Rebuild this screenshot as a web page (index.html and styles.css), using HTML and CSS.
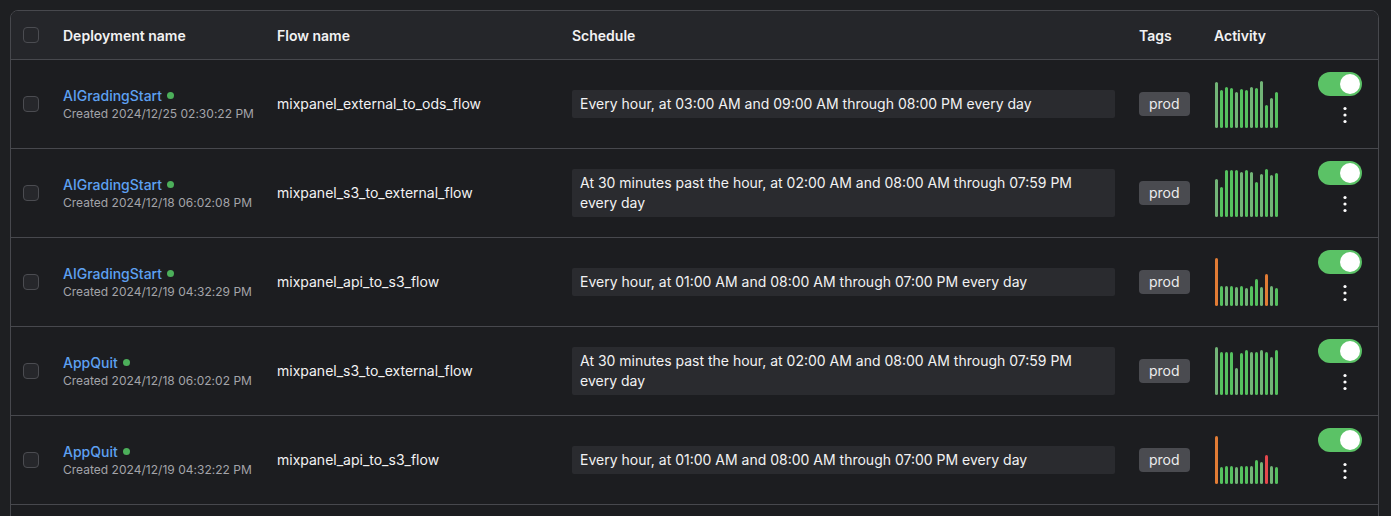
FILE: index.html
```html
<!DOCTYPE html>
<html lang="en">
<head>
    <meta charset="UTF-8">
    <meta name="viewport" content="width=device-width, initial-scale=1.0">
    <title>Deployments</title>
    <link rel="stylesheet" href="styles.css">
</head>
<body>
    <div class="table">
        <div class="row head">
            <div class="cell check"><span class="box"></span></div>
            <div class="cell">Deployment name</div>
            <div class="cell">Flow name</div>
            <div class="cell">Schedule</div>
            <div class="cell">Tags</div>
            <div class="cell">Activity</div>
            <div class="cell"></div>
        </div>
        <div id="rows"></div>
    </div>

    <script>
        // g = completed, m = muted, o = late, r = failed
        const deployments = [
            {
                name: 'AIGradingStart', created: '2024/12/25 02:30:22 PM',
                flow: 'mixpanel_external_to_ods_flow',
                schedule: 'Every hour, at 03:00 AM and 09:00 AM through 08:00 PM every day',
                bars: [[46,'m'],[38,'g'],[41,'g'],[40,'g'],[36,'m'],[39,'g'],[38,'g'],[41,'m'],[40,'g'],[47,'m'],[23,'g'],[30,'m'],[36,'g']]
            },
            {
                name: 'AIGradingStart', created: '2024/12/18 06:02:08 PM',
                flow: 'mixpanel_s3_to_external_flow',
                schedule: 'At 30 minutes past the hour, at 02:00 AM and 08:00 AM through 07:59 PM every day',
                bars: [[38,'m'],[30,'g'],[47,'g'],[47,'g'],[47,'g'],[45,'m'],[47,'g'],[45,'m'],[35,'g'],[43,'m'],[48,'g'],[42,'m'],[44,'g']]
            },
            {
                name: 'AIGradingStart', created: '2024/12/19 04:32:29 PM',
                flow: 'mixpanel_api_to_s3_flow',
                schedule: 'Every hour, at 01:00 AM and 08:00 AM through 07:00 PM every day',
                bars: [[48,'o'],[20,'g'],[20,'m'],[20,'g'],[19,'m'],[20,'g'],[18,'m'],[20,'g'],[27,'g'],[19,'m'],[32,'o'],[20,'m'],[18,'g']]
            },
            {
                name: 'AppQuit', created: '2024/12/18 06:02:02 PM',
                flow: 'mixpanel_s3_to_external_flow',
                schedule: 'At 30 minutes past the hour, at 02:00 AM and 08:00 AM through 07:59 PM every day',
                bars: [[48,'m'],[43,'g'],[43,'g'],[43,'g'],[27,'m'],[42,'g'],[45,'g'],[43,'m'],[43,'g'],[45,'m'],[43,'g'],[38,'m'],[45,'g']]
            },
            {
                name: 'AppQuit', created: '2024/12/19 04:32:22 PM',
                flow: 'mixpanel_api_to_s3_flow',
                schedule: 'Every hour, at 01:00 AM and 08:00 AM through 07:00 PM every day',
                bars: [[48,'o'],[17,'g'],[18,'g'],[18,'g'],[17,'m'],[18,'g'],[18,'g'],[18,'m'],[24,'g'],[22,'m'],[29,'r'],[18,'m'],[17,'g']]
            }
        ];

        const kebab = '<svg width="24" height="24" viewBox="0 0 24 24"><circle cx="12" cy="5.5" r="1.6"/><circle cx="12" cy="12" r="1.6"/><circle cx="12" cy="18.5" r="1.6"/></svg>';

        const html = deployments.map(d => {
            const bars = d.bars.map(([h, c]) => `<span class="bar ${c}" style="height:${h}px"></span>`).join('');
            return `
            <div class="row">
                <div class="cell check"><span class="box"></span></div>
                <div class="cell name">
                    <div class="title"><a href="#">${d.name}</a><span class="dot"></span></div>
                    <div class="created">Created ${d.created}</div>
                </div>
                <div class="cell flow">${d.flow}</div>
                <div class="cell"><div class="schedule">${d.schedule}</div></div>
                <div class="cell"><span class="tag">prod</span></div>
                <div class="cell"><div class="bars">${bars}</div></div>
                <div class="cell actions">
                    <span class="toggle"><span class="knob"></span></span>
                    <button class="menu">${kebab}</button>
                </div>
            </div>`;
        }).join('');

        document.getElementById('rows').innerHTML = html;
    </script>
</body>
</html>
```

FILE: styles.css
```css
html {
    overflow: hidden;
}

body {
    font-family: Inter, "Noto Sans", sans-serif;
    margin: 10px 12px 0 10px;
    background-color: #1e1f22;
    color: #f2f2f3;
    font-size: 14px;
}

.table {
    border: 1px solid #47484d;
    border-radius: 8px;
    background-color: #1c1d20;
    overflow: hidden;
    padding-bottom: 40px;
}

.row {
    display: grid;
    grid-template-columns: 52px 214px 295px 567px 75px 86px 1fr;
    height: 88px;
    border-bottom: 1px solid #47484d;
}

.row.head {
    height: 48px;
    background-color: #25262a;
    font-weight: 600;
}

.cell {
    display: flex;
    align-items: center;
    min-width: 0;
}

.flow {
    padding-bottom: 1px;
}

.check {
    padding-left: 12px;
}

.box {
    width: 14px;
    height: 14px;
    border: 1px solid #4b4c51;
    border-radius: 4px;
    background-color: #26272b;
}

.name {
    flex-direction: column;
    align-items: flex-start;
    justify-content: center;
}

.title {
    display: flex;
    align-items: center;
    gap: 5px;
    line-height: 18px;
}

.title a {
    color: #5ea1f2;
    text-decoration: none;
    font-weight: 500;
}

.dot {
    width: 7px;
    height: 7px;
    border-radius: 50%;
    background-color: #4caf5a;
}

.created {
    font-size: 12px;
    color: #a3a4a9;
    line-height: 17px;
    letter-spacing: 0.02px;
}

.schedule {
    width: 543px;
    box-sizing: border-box;
    padding: 4px 8px;
    line-height: 20px;
    background-color: #2a2b2f;
    border-radius: 2px;
}

.tag {
    background-color: #4a4b50;
    color: #ececed;
    border-radius: 4px;
    padding: 0 10px;
    line-height: 24px;
}

.bars {
    display: flex;
    align-items: flex-end;
    gap: 2px;
    height: 48px;
    padding-left: 1px;
}

.bar {
    width: 3px;
    border-radius: 2px;
    background-color: #55c15f;
}

.bar.m {
    background-color: #72b577;
}

.bar.o {
    background-color: #e27c35;
}

.bar.r {
    background-color: #e5484d;
}

.actions {
    flex-direction: column;
    align-items: flex-end;
    justify-content: flex-start;
    padding: 12px 16px 0 0;
}

.toggle {
    display: flex;
    justify-content: flex-end;
    align-items: center;
    width: 44px;
    height: 24px;
    box-sizing: border-box;
    padding: 2px;
    border-radius: 12px;
    background-color: #5bc266;
}

.knob {
    width: 20px;
    height: 20px;
    border-radius: 50%;
    background-color: #ffffff;
}

.menu {
    margin: 7px 5px 0 0;
    padding: 0;
    border: none;
    background: none;
    fill: #ffffff;
    width: 24px;
    height: 24px;
    cursor: pointer;
}
```
